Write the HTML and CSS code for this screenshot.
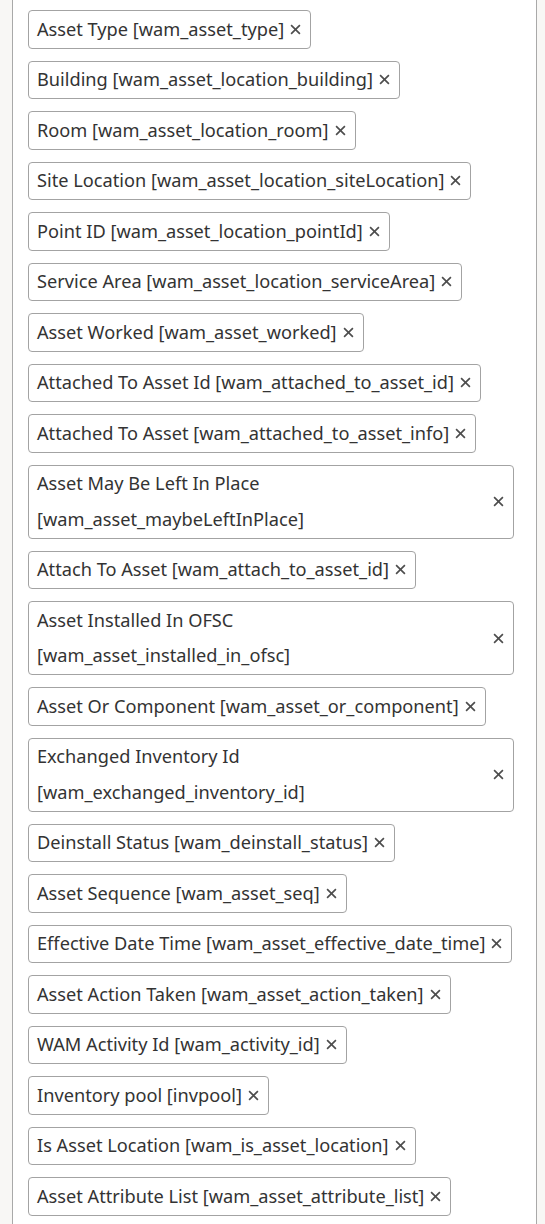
FILE: index.html
```html
<!DOCTYPE html>
<html lang="en">
<head>
<meta charset="utf-8">
<title>Selected fields</title>
<link rel="stylesheet" href="styles.css">
</head>
<body>
<div class="panel">
  <ul class="chips">
    <li class="chip"><span class="chip-label">Asset Type [wam_asset_type]</span><svg class="chip-remove" viewBox="0 0 10 10"><path d="M1 1L9 9M9 1L1 9"/></svg></li>
    <li class="chip"><span class="chip-label">Building [wam_asset_location_building]</span><svg class="chip-remove" viewBox="0 0 10 10"><path d="M1 1L9 9M9 1L1 9"/></svg></li>
    <li class="chip"><span class="chip-label">Room [wam_asset_location_room]</span><svg class="chip-remove" viewBox="0 0 10 10"><path d="M1 1L9 9M9 1L1 9"/></svg></li>
    <li class="chip"><span class="chip-label">Site Location [wam_asset_location_siteLocation]</span><svg class="chip-remove" viewBox="0 0 10 10"><path d="M1 1L9 9M9 1L1 9"/></svg></li>
    <li class="chip"><span class="chip-label">Point ID [wam_asset_location_pointId]</span><svg class="chip-remove" viewBox="0 0 10 10"><path d="M1 1L9 9M9 1L1 9"/></svg></li>
    <li class="chip"><span class="chip-label">Service Area [wam_asset_location_serviceArea]</span><svg class="chip-remove" viewBox="0 0 10 10"><path d="M1 1L9 9M9 1L1 9"/></svg></li>
    <li class="chip"><span class="chip-label">Asset Worked [wam_asset_worked]</span><svg class="chip-remove" viewBox="0 0 10 10"><path d="M1 1L9 9M9 1L1 9"/></svg></li>
    <li class="chip"><span class="chip-label">Attached To Asset Id [wam_attached_to_asset_id]</span><svg class="chip-remove" viewBox="0 0 10 10"><path d="M1 1L9 9M9 1L1 9"/></svg></li>
    <li class="chip"><span class="chip-label">Attached To Asset [wam_attached_to_asset_info]</span><svg class="chip-remove" viewBox="0 0 10 10"><path d="M1 1L9 9M9 1L1 9"/></svg></li>
    <li class="chip chip-wide"><span class="chip-label">Asset May Be Left In Place<br>[wam_asset_maybeLeftInPlace]</span><svg class="chip-remove" viewBox="0 0 10 10"><path d="M1 1L9 9M9 1L1 9"/></svg></li>
    <li class="chip"><span class="chip-label">Attach To Asset [wam_attach_to_asset_id]</span><svg class="chip-remove" viewBox="0 0 10 10"><path d="M1 1L9 9M9 1L1 9"/></svg></li>
    <li class="chip chip-wide"><span class="chip-label">Asset Installed In OFSC<br>[wam_asset_installed_in_ofsc]</span><svg class="chip-remove" viewBox="0 0 10 10"><path d="M1 1L9 9M9 1L1 9"/></svg></li>
    <li class="chip"><span class="chip-label">Asset Or Component [wam_asset_or_component]</span><svg class="chip-remove" viewBox="0 0 10 10"><path d="M1 1L9 9M9 1L1 9"/></svg></li>
    <li class="chip chip-wide"><span class="chip-label">Exchanged Inventory Id<br>[wam_exchanged_inventory_id]</span><svg class="chip-remove" viewBox="0 0 10 10"><path d="M1 1L9 9M9 1L1 9"/></svg></li>
    <li class="chip"><span class="chip-label">Deinstall Status [wam_deinstall_status]</span><svg class="chip-remove" viewBox="0 0 10 10"><path d="M1 1L9 9M9 1L1 9"/></svg></li>
    <li class="chip"><span class="chip-label">Asset Sequence [wam_asset_seq]</span><svg class="chip-remove" viewBox="0 0 10 10"><path d="M1 1L9 9M9 1L1 9"/></svg></li>
    <li class="chip"><span class="chip-label">Effective Date Time [wam_asset_effective_date_time]</span><svg class="chip-remove" viewBox="0 0 10 10"><path d="M1 1L9 9M9 1L1 9"/></svg></li>
    <li class="chip"><span class="chip-label">Asset Action Taken [wam_asset_action_taken]</span><svg class="chip-remove" viewBox="0 0 10 10"><path d="M1 1L9 9M9 1L1 9"/></svg></li>
    <li class="chip"><span class="chip-label">WAM Activity Id [wam_activity_id]</span><svg class="chip-remove" viewBox="0 0 10 10"><path d="M1 1L9 9M9 1L1 9"/></svg></li>
    <li class="chip"><span class="chip-label">Inventory pool [invpool]</span><svg class="chip-remove" viewBox="0 0 10 10"><path d="M1 1L9 9M9 1L1 9"/></svg></li>
    <li class="chip"><span class="chip-label">Is Asset Location [wam_is_asset_location]</span><svg class="chip-remove" viewBox="0 0 10 10"><path d="M1 1L9 9M9 1L1 9"/></svg></li>
    <li class="chip"><span class="chip-label">Asset Attribute List [wam_asset_attribute_list]</span><svg class="chip-remove" viewBox="0 0 10 10"><path d="M1 1L9 9M9 1L1 9"/></svg></li>
  </ul>
</div>
</body>
</html>
```
FILE: styles.css
```css
html, body {
  margin: 0;
  padding: 0;
}

body {
  background: #f8f7f5;
  font-family: "Noto Sans", "Liberation Sans", sans-serif;
  color: #333333;
  height: 1224px;
  overflow: hidden;
}

.panel {
  margin-left: 12px;
  width: 523px;
  height: 1224px;
  background: #ffffff;
  border-left: 1px solid #a9a9a9;
  border-right: 1px solid #a9a9a9;
}

.chips {
  list-style: none;
  margin: 0;
  padding: 10px 22px 0 15px;
  display: flex;
  flex-direction: column;
  align-items: flex-start;
  gap: 12px;
}

.chip {
  display: flex;
  align-items: center;
  gap: 6px;
  box-sizing: border-box;
  border: 1px solid #a3a3a3;
  border-radius: 4px;
  padding: 0.5px 9px 0.5px 8px;
  font-size: 18.2px;
  line-height: 35.5px;
  white-space: nowrap;
}

.chip-wide {
  width: 100%;
  justify-content: space-between;
  white-space: normal;
}

.chip-remove {
  flex-shrink: 0;
  width: 11px;
  height: 11px;
  stroke: #4d4d4d;
  stroke-width: 1.5;
  fill: none;
}
```
